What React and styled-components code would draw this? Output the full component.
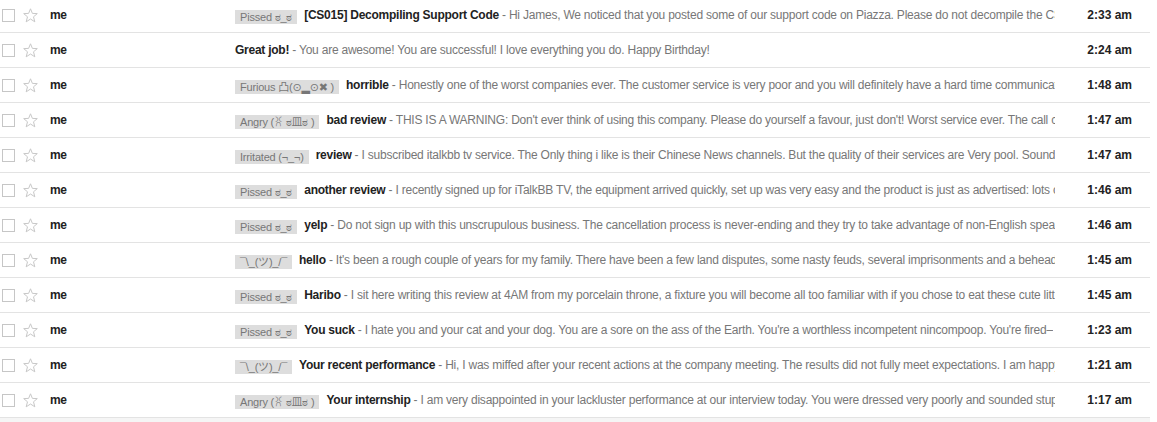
import React from 'react'
import styled, { createGlobalStyle } from 'styled-components'

const GlobalStyle = createGlobalStyle`
  html, body {
    margin: 0;
    padding: 0;
    background: #fff;
    font-family: "Liberation Sans", Arial, "Noto Sans", "DejaVu Sans", "Noto Sans CJK SC", sans-serif;
  }
`;

const messages = [
  { label: 'Pissed ಠ_ಠ', subject: '[CS015] Decompiling Support Code', snippet: 'Hi James, We noticed that you posted some of our support code on Piazza. Please do not decompile the CS015 support code or post it anywhere online.', time: '2:33 am' },
  { label: null, subject: 'Great job!', snippet: 'You are awesome! You are successful! I love everything you do. Happy Birthday!', time: '2:24 am' },
  { label: 'Furious 凸(⊙▂⊙✖ )', subject: 'horrible', snippet: 'Honestly one of the worst companies ever. The customer service is very poor and you will definitely have a hard time communicating with them.', time: '1:48 am' },
  { label: 'Angry (ꐦ ಠ皿ಠ )', subject: 'bad review', snippet: "THIS IS A WARNING: Don't ever think of using this company. Please do yourself a favour, just don't! Worst service ever. The call center is useless.", time: '1:47 am' },
  { label: 'Irritated (¬_¬)', subject: 'review', snippet: 'I subscribed italkbb tv service. The Only thing i like is their Chinese News channels. But the quality of their services are Very pool. Sound quality is bad.', time: '1:47 am' },
  { label: 'Pissed ಠ_ಠ', subject: 'another review', snippet: 'I recently signed up for iTalkBB TV, the equipment arrived quickly, set up was very easy and the product is just as advertised: lots of channels.', time: '1:46 am' },
  { label: 'Pissed ಠ_ಠ', subject: 'yelp', snippet: 'Do not sign up with this unscrupulous business. The cancellation process is never-ending and they try to take advantage of non-English speakers.', time: '1:46 am' },
  { label: '¯\\_(ツ)_/¯', subject: 'hello', snippet: "It's been a rough couple of years for my family. There have been a few land disputes, some nasty feuds, several imprisonments and a beheading.", time: '1:45 am' },
  { label: 'Pissed ಠ_ಠ', subject: 'Haribo', snippet: 'I sit here writing this review at 4AM from my porcelain throne, a fixture you will become all too familiar with if you chose to eat these cute little bears.', time: '1:45 am' },
  { label: 'Pissed ಠ_ಠ', subject: 'You suck', snippet: "I hate you and your cat and your dog. You are a sore on the ass of the Earth. You're a worthless incompetent nincompoop. You're fired–", time: '1:23 am' },
  { label: '¯\\_(ツ)_/¯', subject: 'Your recent performance', snippet: 'Hi, I was miffed after your recent actions at the company meeting. The results did not fully meet expectations. I am happy to discuss further.', time: '1:21 am' },
  { label: 'Angry (ꐦ ಠ皿ಠ )', subject: 'Your internship', snippet: 'I am very disappointed in your lackluster performance at our interview today. You were dressed very poorly and sounded stupid.', time: '1:17 am' },
];

function StarIcon() {
  return (
    <svg width="15" height="15" viewBox="0 0 15 15">
      <polygon
        points="7.5,0.8 9.4,5.4 14.3,5.6 10.5,8.8 11.8,13.8 7.5,11 3.2,13.8 4.5,8.8 0.7,5.6 5.6,5.4"
        fill="none"
        stroke="#c8c8c8"
        strokeWidth="1"
      />
    </svg>
  );
}

export default function App() {
  return (
    <>
      <GlobalStyle />
      <Page>
        <List>
          {messages.map((m, i) => (
            <Row key={i}>
              <CheckCell><Check /></CheckCell>
              <StarCell><StarIcon /></StarCell>
              <Sender>me</Sender>
              <Main>
                {m.label && <Label>{m.label}</Label>}
                <Subject>{m.subject}</Subject>
                <Snippet> - {m.snippet}</Snippet>
              </Main>
              <Time>{m.time}</Time>
            </Row>
          ))}
        </List>
      </Page>
    </>
  );
}

const Page = styled.div`
  width: 1150px;
  height: 422px;
  background: #f5f5f5;
  overflow: hidden;
`;

const List = styled.div`
  margin-top: -2px;
  background: #fff;
`;

const Row = styled.div`
  display: flex;
  align-items: center;
  height: 34px;
  border-bottom: 1px solid #e3e3e3;
  padding-left: 2px;
  font-size: 12px;
  color: #222;
`;

const CheckCell = styled.div`
  width: 20px;
  display: flex;
  align-items: center;
`;

const Check = styled.span`
  display: block;
  width: 11px;
  height: 11px;
  border: 1px solid #c6c6c6;
  background: #fff;
`;

const StarCell = styled.div`
  width: 28px;
  display: flex;
  align-items: center;
  padding-left: 1px;
  box-sizing: border-box;
`;

const Sender = styled.div`
  width: 185px;
  font-weight: bold;
  letter-spacing: -0.3px;
`;

const Main = styled.div`
  flex: 1;
  min-width: 0;
  display: flex;
  align-items: center;
  white-space: nowrap;
  overflow: hidden;
`;

const Label = styled.span`
  flex: none;
  background: #dddddd;
  color: #777;
  font-size: 11px;
  letter-spacing: -0.2px;
  line-height: 14px;
  height: 14px;
  padding: 0 5px;
  margin: 3px 7px 0 0;
`;

const Subject = styled.span`
  flex: none;
  font-weight: bold;
  color: #222;
  letter-spacing: -0.25px;
`;

const Snippet = styled.span`
  color: #777;
  white-space: pre;
  overflow: hidden;
  letter-spacing: -0.22px;
`;

const Time = styled.div`
  width: 95px;
  flex: none;
  text-align: right;
  padding-right: 18px;
  box-sizing: border-box;
  font-weight: bold;
`;
